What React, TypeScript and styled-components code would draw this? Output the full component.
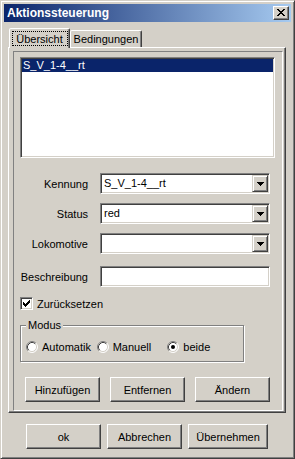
import React from 'react';
import styled, { createGlobalStyle } from 'styled-components';

const GlobalStyle = createGlobalStyle`
    html, body {
        margin: 0;
        padding: 0;
        background: #D4D0C8;
    }
    body {
        font-family: "Liberation Sans", Arial, sans-serif;
        font-size: 11px;
        color: #000;
    }
    * {
        box-sizing: border-box;
    }
`;

const face = '#D4D0C8';

const kinds = ['Automatik', 'Manuell', 'beide'];

const Arrow = () => (
    <svg width="7" height="4" viewBox="0 0 7 4" shapeRendering="crispEdges">
        <rect x="0" y="0" width="7" height="1" fill="#000" />
        <rect x="1" y="1" width="5" height="1" fill="#000" />
        <rect x="2" y="2" width="3" height="1" fill="#000" />
        <rect x="3" y="3" width="1" height="1" fill="#000" />
    </svg>
);

const CloseGlyph = () => (
    <svg width="8" height="7" viewBox="0 0 8 7" shapeRendering="crispEdges">
        {[[0, 0, 2], [6, 0, 2], [1, 1, 2], [5, 1, 2], [2, 2, 4], [3, 3, 2], [2, 4, 4], [1, 5, 2], [5, 5, 2], [0, 6, 2], [6, 6, 2]].map(([x, y, w], i) => (
            <rect key={i} x={x} y={y} width={w} height="1" fill="#000" />
        ))}
    </svg>
);

const CheckGlyph = () => (
    <svg width="7" height="7" viewBox="0 0 7 7" shapeRendering="crispEdges">
        {[[6, 0, 1], [5, 1, 2], [0, 2, 1], [4, 2, 3], [0, 3, 2], [3, 3, 3], [0, 4, 5], [1, 5, 3], [2, 6, 1]].map(([x, y, w], i) => (
            <rect key={i} x={x} y={y} width={w} height="1" fill="#000" />
        ))}
    </svg>
);

const RadioGlyph = ({ checked }: { checked: boolean }) => (
    <svg width="12" height="12" viewBox="0 0 12 12">
        <circle cx="6" cy="6" r="5" fill="#fff" />
        <path d="M2.11 9.89 A5.5 5.5 0 0 1 9.89 2.11" fill="none" stroke="#808080" strokeWidth="1" />
        <path d="M9.89 2.11 A5.5 5.5 0 0 1 2.11 9.89" fill="none" stroke="#fff" strokeWidth="1" />
        <path d="M2.82 9.18 A4.5 4.5 0 0 1 9.18 2.82" fill="none" stroke="#404040" strokeWidth="1" />
        <path d="M9.18 2.82 A4.5 4.5 0 0 1 2.82 9.18" fill="none" stroke={face} strokeWidth="1" />
        {checked && <circle cx="6" cy="6" r="2" fill="#000" />}
    </svg>
);

const Combo = ({ value }: { value: string }) => (
    <Sunken $width={170}>
        <FieldText>{value}</FieldText>
        <DropButton><Arrow /></DropButton>
    </Sunken>
);

const App = () => {
    return (
        <>
            <GlobalStyle />
            <Window>
                <TitleBar>
                    <Title>Aktionssteuerung</Title>
                    <CloseButton><CloseGlyph /></CloseButton>
                </TitleBar>
                <Client>
                    <TabRow>
                        <Tab $active>
                            <FocusLabel>Übersicht</FocusLabel>
                        </Tab>
                        <Tab>Bedingungen</Tab>
                    </TabRow>
                    <Panel>
                        <InnerFrame>
                            <ListBox>
                                <ListItem>S_V_1-4__rt</ListItem>
                            </ListBox>
                            <Form>
                                <Row>
                                    <Label>Kennung</Label>
                                    <Combo value="S_V_1-4__rt" />
                                </Row>
                                <Row>
                                    <Label>Status</Label>
                                    <Combo value="red" />
                                </Row>
                                <Row>
                                    <Label>Lokomotive</Label>
                                    <Combo value="" />
                                </Row>
                                <Row $spaced>
                                    <Label>Beschreibung</Label>
                                    <Sunken $width={170}>
                                        <FieldText />
                                    </Sunken>
                                </Row>
                            </Form>
                            <CheckRow>
                                <CheckBox><CheckGlyph /></CheckBox>
                                <span>Zurücksetzen</span>
                            </CheckRow>
                            <Group>
                                <Legend>Modus</Legend>
                                <RadioRow>
                                    {kinds.map((k) => (
                                        <Radio key={k}>
                                            <RadioGlyph checked={k === 'beide'} />
                                            <span>{k}</span>
                                        </Radio>
                                    ))}
                                </RadioRow>
                            </Group>
                            <ActionRow>
                                <Button>Hinzufügen</Button>
                                <Button>Entfernen</Button>
                                <Button>Ändern</Button>
                            </ActionRow>
                        </InnerFrame>
                    </Panel>
                    <FooterRow>
                        <Button>ok</Button>
                        <Button>Abbrechen</Button>
                        <Button $width={80}>Übernehmen</Button>
                    </FooterRow>
                </Client>
            </Window>
        </>
    );
};

const Window = styled.div`
    width: 295px;
    height: 459px;
    display: flex;
    flex-direction: column;
    background: ${face};
    border: 1px solid;
    border-color: ${face} #404040 #404040 ${face};
    box-shadow: inset 1px 1px #fff, inset -1px -1px #808080;
    padding: 3px;
`;

const TitleBar = styled.div`
    height: 18px;
    flex: none;
    display: flex;
    align-items: center;
    justify-content: space-between;
    padding: 0 2px;
    background: linear-gradient(to right, #0A246A, #A6CAF0);
`;

const Title = styled.div`
    color: #fff;
    font-weight: bold;
    font-size: 12px;
    padding-left: 1px;
`;

const CloseButton = styled.div`
    width: 16px;
    height: 14px;
    display: flex;
    align-items: center;
    justify-content: center;
    background: ${face};
    border: 1px solid;
    border-color: #fff #404040 #404040 #fff;
    box-shadow: inset -1px -1px #808080;
    padding: 0 1px 1px 0;
`;

const Client = styled.div`
    flex: 1;
    display: flex;
    flex-direction: column;
    padding: 6px 4px 3px 4px;
`;

const TabRow = styled.div`
    display: flex;
    align-items: flex-end;
    height: 19px;
    padding-left: 1px;
`;

const Tab = styled.div<{ $active?: boolean }>`
    position: relative;
    z-index: ${(p) => (p.$active ? 1 : 0)};
    width: ${(p) => (p.$active ? 61 : 72)}px;
    height: ${(p) => (p.$active ? 20 : 17)}px;
    margin-bottom: ${(p) => (p.$active ? -1 : 0)}px;
    display: flex;
    align-items: ${(p) => (p.$active ? 'flex-start' : 'center')};
    justify-content: center;
    padding-top: ${(p) => (p.$active ? 2 : 0)}px;
    background: ${face};
    border: 1px solid;
    border-bottom: none;
    border-color: #fff #404040 transparent #fff;
    border-radius: 2px 2px 0 0;
    box-shadow: inset -1px 0 #808080;
`;

const FocusLabel = styled.div`
    width: 56px;
    height: 15px;
    display: flex;
    align-items: center;
    justify-content: center;
    border: 1px dotted #000;
`;

const Panel = styled.div`
    width: 278px;
    background: ${face};
    border: 1px solid;
    border-color: #fff #404040 #404040 #fff;
    box-shadow: inset -1px -1px #808080;
    padding: 3px 2px 1px 4px;
`;

const InnerFrame = styled.div`
    display: flex;
    flex-direction: column;
    border: 1px solid;
    border-color: #808080 #fff #fff #808080;
    padding: 5px 0 8px 6px;
`;

const ListBox = styled.div`
    width: 255px;
    height: 101px;
    background: #fff;
    border: 1px solid;
    border-color: #808080 #fff #fff #808080;
    box-shadow: inset 1px 1px #404040, inset -1px -1px ${face};
    padding: 1px;
`;

const ListItem = styled.div`
    height: 13px;
    line-height: 13px;
    background: #0A246A;
    color: #fff;
    padding-left: 1px;
`;

const Form = styled.div`
    display: flex;
    flex-direction: column;
    gap: 9px;
    margin-top: 15px;
`;

const Row = styled.div<{ $spaced?: boolean }>`
    display: flex;
    align-items: center;
    gap: 12px;
    height: 21px;
    margin-top: ${(p) => (p.$spaced ? 3 : 0)}px;
`;

const Label = styled.div`
    width: 68px;
    text-align: right;
    white-space: nowrap;
`;

const Sunken = styled.div<{ $width: number }>`
    width: ${(p) => p.$width}px;
    height: 21px;
    display: flex;
    background: #fff;
    border: 1px solid;
    border-color: #808080 #fff #fff #808080;
    box-shadow: inset 1px 1px #404040, inset -1px -1px ${face};
    padding: 1px;
`;

const FieldText = styled.div`
    flex: 1;
    line-height: 17px;
    padding-left: 2px;
    white-space: nowrap;
`;

const DropButton = styled.div`
    width: 16px;
    height: 17px;
    display: flex;
    align-items: center;
    justify-content: center;
    background: ${face};
    border: 1px solid;
    border-color: ${face} #404040 #404040 ${face};
    box-shadow: inset 1px 1px #fff, inset -1px -1px #808080;
`;

const CheckRow = styled.div`
    display: flex;
    align-items: center;
    gap: 4px;
    height: 13px;
    margin-top: 10px;
`;

const CheckBox = styled.div`
    width: 13px;
    height: 13px;
    display: flex;
    align-items: center;
    justify-content: center;
    background: #fff;
    border: 1px solid;
    border-color: #808080 #fff #fff #808080;
    box-shadow: inset 1px 1px #404040, inset -1px -1px ${face};
`;

const Group = styled.fieldset`
    width: 224px;
    margin: 9px 0 0 0;
    padding: 8px 5px 8px 5px;
    border: 1px solid #808080;
    box-shadow: inset 1px 1px #fff, 1px 1px #fff;
    min-width: 0;
`;

const Legend = styled.legend`
    padding: 0 2px;
    line-height: 13px;
    background: ${face};
`;

const RadioRow = styled.div`
    display: flex;
    height: 13px;
    align-items: center;
`;

const Radio = styled.div`
    width: 73px;
    display: flex;
    align-items: center;
    gap: 4px;
`;

const ActionRow = styled.div`
    display: flex;
    gap: 10px;
    margin: 15px 0 0 5px;
`;

const FooterRow = styled.div`
    display: flex;
    gap: 6px;
    margin: 11px 0 0 18px;
`;

const Button = styled.div<{ $width?: number }>`
    width: ${(p) => p.$width ?? 75}px;
    height: 25px;
    display: flex;
    align-items: center;
    justify-content: center;
    background: ${face};
    border: 1px solid;
    border-color: #fff #404040 #404040 #fff;
    box-shadow: inset -1px -1px #808080;
`;

export default App;
